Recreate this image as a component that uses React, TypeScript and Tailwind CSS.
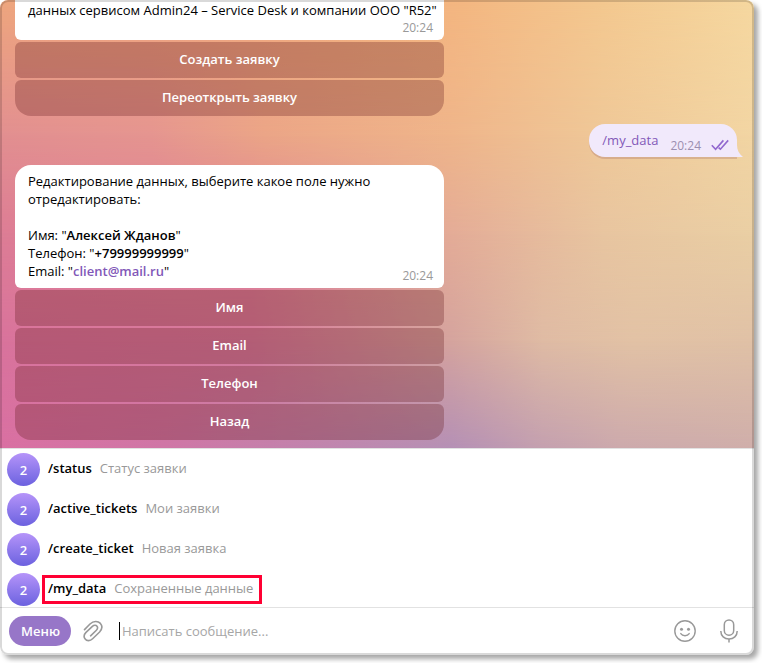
import React, { useState } from 'react';

const COMMANDS = [
  { name: '/status', description: 'Статус заявки' },
  { name: '/active_tickets', description: 'Мои заявки' },
  { name: '/create_ticket', description: 'Новая заявка' },
  { name: '/my_data', description: 'Сохраненные данные', highlighted: true },
];

// Wallpaper: horizontal colour bands, each one faded in below the previous
function Wallpaper() {
  return (
    <div className="absolute inset-0 -z-10 bg-[linear-gradient(90deg,#eea67e_0%,#f0a87e_33%,#f4b680_60%,#f4c88f_80%,#f6d8a0_100%)]">
      <div className="absolute inset-0 bg-[linear-gradient(90deg,#e28f90_0%,#e59590_20%,#eba587_35%,#efb58a_60%,#efc898_80%,#f2d5a3_100%)] [mask-image:linear-gradient(transparent_0%,black_30%)]" />
      <div className="absolute inset-0 bg-[linear-gradient(90deg,#dd7d95_0%,#df8093_33%,#e4ac97_60%,#e8c5a0_80%,#eacfa4_100%)] [mask-image:linear-gradient(transparent_30%,black_52%)]" />
      <div className="absolute inset-0 bg-[linear-gradient(90deg,#d9739c_0%,#d67a9c_33%,#d5a49e_60%,#dfbba4_72%,#e2c2a5_84%,#e0c1a6_100%)] [mask-image:linear-gradient(transparent_52%,black_76%)]" />
      <div className="absolute inset-0 bg-[linear-gradient(90deg,#d970a2_0%,#cf76a6_22%,#c480ab_36%,#b590b5_60%,#c4a0af_72%,#cca9ac_82%,#cfaeaa_100%)] [mask-image:linear-gradient(transparent_76%,black_100%)]" />
    </div>
  );
}

function InlineKeyboard({ buttons }: { buttons: string[] }) {
  return (
    <div className="mt-0.5 flex flex-col gap-0.5">
      {buttons.map(b => (
        <button
          key={b}
          type="button"
          className="h-9 rounded-md bg-[rgba(100,27,30,0.3)] pb-0.5 text-[13px] font-semibold text-white last:rounded-b-2xl"
        >
          {b}
        </button>
      ))}
    </div>
  );
}

function DoubleCheck() {
  return (
    <svg width="18" height="12" viewBox="0 0 18 12" fill="none" stroke="#9268cf" strokeWidth="1.6" aria-hidden="true">
      <path d="M0.8 6.2 L4.6 10.2 L12.4 1.4" />
      <path d="M7.6 8.6 L9.4 10.2 L17.2 1.4" />
    </svg>
  );
}

function ClipIcon() {
  return (
    <svg width="20" height="22" viewBox="0 0 20 22" fill="none" stroke="#999" strokeWidth="1.6" strokeLinecap="round" aria-hidden="true">
      <path d="M1.5 9.6 L7 4 C10.6 0.6 15 0.8 17.4 3.4 C19.6 6 19 9.4 16.6 12 L9.6 18.8 C7 21.4 3.6 21 2.2 19 C0.6 17 1 14.4 3 12.4 L9.4 6.4 C11 5 13 5 14 6.2 C15 7.6 14.6 9 13.4 10.2 L7.6 15.8" />
    </svg>
  );
}

function SmileIcon() {
  return (
    <svg width="22" height="22" viewBox="0 0 22 22" fill="none" stroke="#999" strokeWidth="1.4" strokeLinecap="round" aria-hidden="true">
      <circle cx="11" cy="11" r="10.2" />
      <path d="M6.8 13.6 C8.6 16.4 13.4 16.4 15.2 13.6" />
      <circle cx="7.5" cy="9.3" r="1.5" fill="#999" stroke="none" />
      <circle cx="14.5" cy="9.3" r="1.5" fill="#999" stroke="none" />
    </svg>
  );
}

function MicIcon() {
  return (
    <svg width="18" height="24" viewBox="0 0 18 24" fill="none" stroke="#999" strokeWidth="1.5" aria-hidden="true">
      <rect x="4.3" y="1" width="9.4" height="15.2" rx="4.7" />
      <path d="M0.8 12 C0.8 17 4.4 20 9 20 C13.6 20 17.2 17 17.2 12" />
      <path d="M9 20 V23.6" />
    </svg>
  );
}

export default function App() {
  const [message, setMessage] = useState('');

  return (
    <div className="bg-white pr-2 pb-2 font-['Open_Sans','Noto_Sans',sans-serif] text-[13px] leading-[18px] text-black">
      <div className="relative overflow-hidden rounded-lg bg-white shadow-[4px_4px_5px_rgba(0,0,0,0.35)]">
        <main className="relative isolate flex flex-col pr-2.5 pb-2 pl-[15px]">
          <Wallpaper />

          <section className="w-[429px] max-w-full">
            <div className="rounded-b-md bg-white px-[13px] pt-px pb-1">
              <p className="whitespace-nowrap">данных сервисом Admin24 – Service Desk и компании ООО "R52"</p>
              <p className="-mr-0.5 text-right text-xs leading-[17px] text-[#999]">20:24</p>
            </div>
            <InlineKeyboard buttons={['Создать заявку', 'Переоткрыть заявку']} />
          </section>

          <section className="relative my-2 mr-[7px] flex h-[33px] items-center self-end rounded-2xl rounded-br-none bg-[#f1e9fb] pr-2 pl-[13px] shadow-[0_2px_0_rgba(150,90,90,0.25)]">
            <a href="#my_data" className="pb-0.5 text-[#8258b8]">/my_data</a>
            <span className="ml-3 pt-2.5 text-xs text-[#9c8fb0]">20:24</span>
            <span className="ml-2.5 pt-2"><DoubleCheck /></span>
            <svg className="absolute bottom-0 left-full" width="6" height="12" viewBox="0 0 6 12" fill="#f1e9fb" aria-hidden="true">
              <path d="M0 0 C0 5 2 9 6 12 H0 Z" />
            </svg>
          </section>

          <section className="w-[429px] max-w-full">
            <div className="flex items-end justify-between rounded-t-2xl rounded-b-md bg-white pt-[7px] pr-[11px] pb-2 pl-[13px]">
              <div>
                <p>Редактирование данных, выберите какое поле нужно<br />отредактировать:</p>
                <p className="mt-[18px]">Имя: "<b className="font-semibold">Алексей Жданов</b>"</p>
                <p>Телефон: "<b className="font-semibold">+79999999999</b>"</p>
                <p>Email: "<a href="mailto:client@mail.ru" className="font-semibold text-[#8258b8]">client@mail.ru</a>"</p>
              </div>
              <span className="text-xs leading-[8px] text-[#999]">20:24</span>
            </div>
            <InlineKeyboard buttons={['Имя', 'Email', 'Телефон', 'Назад']} />
          </section>
        </main>

        <ul className="flex flex-col gap-[7px] border-y border-[#e2e2e2] pt-1 pb-px pl-[7px]">
          {COMMANDS.map(c => (
            <li key={c.name} className="flex items-center">
              <span className="flex size-[33px] items-center justify-center rounded-full bg-linear-to-b from-[#b694f9] to-[#6c61df] font-semibold text-white">2</span>
              <button
                type="button"
                className={`ml-0.5 flex h-[29px] items-center gap-2 border-3 pr-1.5 pb-[3px] pl-[3px] ${c.highlighted ? 'border-[#ff0033]' : 'border-transparent'}`}
              >
                <span className="font-semibold">{c.name}</span>
                <span className="text-[#999]">{c.description}</span>
              </button>
            </li>
          ))}
        </ul>

        <form className="flex h-[47px] items-center pr-4 pb-px pl-[9px]" onSubmit={e => e.preventDefault()}>
          <button type="button" className="h-[30px] rounded-full bg-[#9776c8] pr-[11px] pl-3 font-semibold text-white">Меню</button>
          <button type="button" aria-label="Прикрепить файл" className="ml-3"><ClipIcon /></button>
          <span className="ml-4 h-[18px] w-px bg-black" />
          <input
            type="text"
            aria-label="Сообщение"
            placeholder="Написать сообщение..."
            value={message}
            onChange={e => setMessage(e.target.value)}
            className="min-w-0 flex-1 pl-0.5 outline-none placeholder:text-[#a6a6a6]"
          />
          <button type="button" aria-label="Эмодзи"><SmileIcon /></button>
          <button type="button" aria-label="Голосовое сообщение" className="ml-6"><MicIcon /></button>
        </form>

        {/* Translucent window frame on top of everything */}
        <div className="pointer-events-none absolute inset-0 rounded-lg border-2 border-black/15" />
      </div>
    </div>
  );
}
